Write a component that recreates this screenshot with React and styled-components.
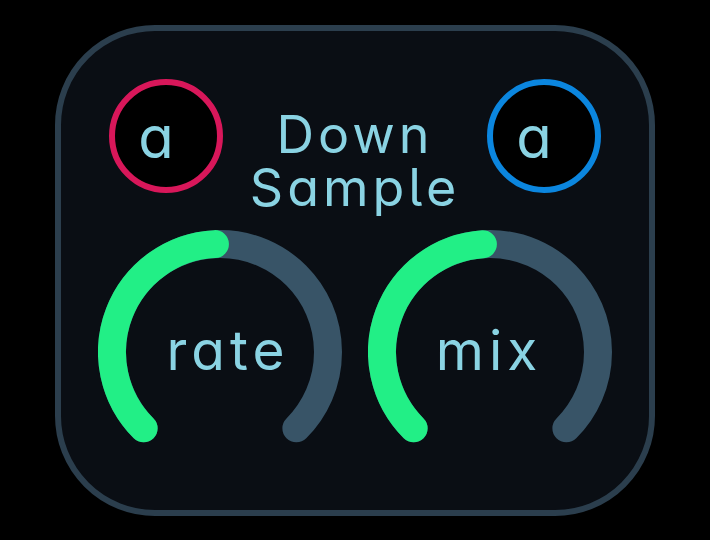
import React from "react";
import styled, { createGlobalStyle } from "styled-components";

const GlobalStyle = createGlobalStyle`
  html, body {
    margin: 0;
    padding: 0;
    background: #000;
  }
`;

const Stage = styled.div`
  width: 100vw;
  height: 100vh;
  display: flex;
  align-items: center;
  justify-content: center;
  font-family: Inter, "DejaVu Sans", sans-serif;
  font-feature-settings: "cv05", "cv11";
  color: #8ad3e3;
`;

const Panel = styled.div`
  box-sizing: border-box;
  width: 600px;
  height: 491px;
  background: #0a0e14;
  border: 6px solid #2b3e4d;
  border-radius: 100px;
  display: flex;
  flex-direction: column;
`;

const Header = styled.div`
  display: grid;
  grid-template-columns: 114px 1fr 114px;
  align-items: start;
  padding: 48px 48px 0;
`;

const Port = styled.div`
  box-sizing: border-box;
  width: 114px;
  height: 114px;
  border-radius: 50%;
  border: 6px solid ${(p) => p.$color};
  background: #000;
  display: flex;
  align-items: center;
  justify-content: center;
  padding-right: 20px;
  padding-top: 2px;
  font-size: 58px;
  line-height: 1;
`;

const Title = styled.div`
  margin-top: 29px;
  text-align: center;
  font-size: 52px;
  line-height: 53px;
  letter-spacing: 4px;
`;

const Knobs = styled.div`
  display: flex;
  justify-content: center;
  gap: 26px;
  margin-top: 16px;
`;

const KnobBox = styled.div`
  display: grid;
  place-items: center;
  width: 244px;
  height: 244px;
  & > * {
    grid-area: 1 / 1;
  }
`;

const KnobLabel = styled.span`
  font-size: 55px;
  line-height: 1;
  letter-spacing: 5px;
  margin-left: ${(p) => p.$shift || 0}px;
  padding-bottom: 2px;
`;

const R = 108;
const C = 122;

function point(deg) {
  const a = (deg * Math.PI) / 180;
  return [C + R * Math.sin(a), C - R * Math.cos(a)];
}

function arc(from, to) {
  const [x1, y1] = point(from);
  const [x2, y2] = point(to);
  const large = to - from > 180 ? 1 : 0;
  return `M ${x1} ${y1} A ${R} ${R} 0 ${large} 1 ${x2} ${y2}`;
}

function Knob({ label, value, shift }) {
  const end = -135 + 270 * value;
  return (
    <KnobBox>
      <svg width="244" height="244" viewBox="0 0 244 244">
        <path d={arc(-135, 135)} fill="none" stroke="#385467" strokeWidth="28" strokeLinecap="round" />
        <path d={arc(-135, end)} fill="none" stroke="#22ef86" strokeWidth="28" strokeLinecap="round" />
      </svg>
      <KnobLabel $shift={shift}>{label}</KnobLabel>
    </KnobBox>
  );
}

export default function App() {
  return (
    <>
      <GlobalStyle />
      <Stage>
        <Panel>
          <Header>
            <Port $color="#d8175a">a</Port>
            <Title>
              Down
              <br />
              Sample
            </Title>
            <Port $color="#0b86df">a</Port>
          </Header>
          <Knobs>
            <Knob label="rate" value={0.49} shift={16} />
            <Knob label="mix" value={0.486} shift={-2} />
          </Knobs>
        </Panel>
      </Stage>
    </>
  );
}
